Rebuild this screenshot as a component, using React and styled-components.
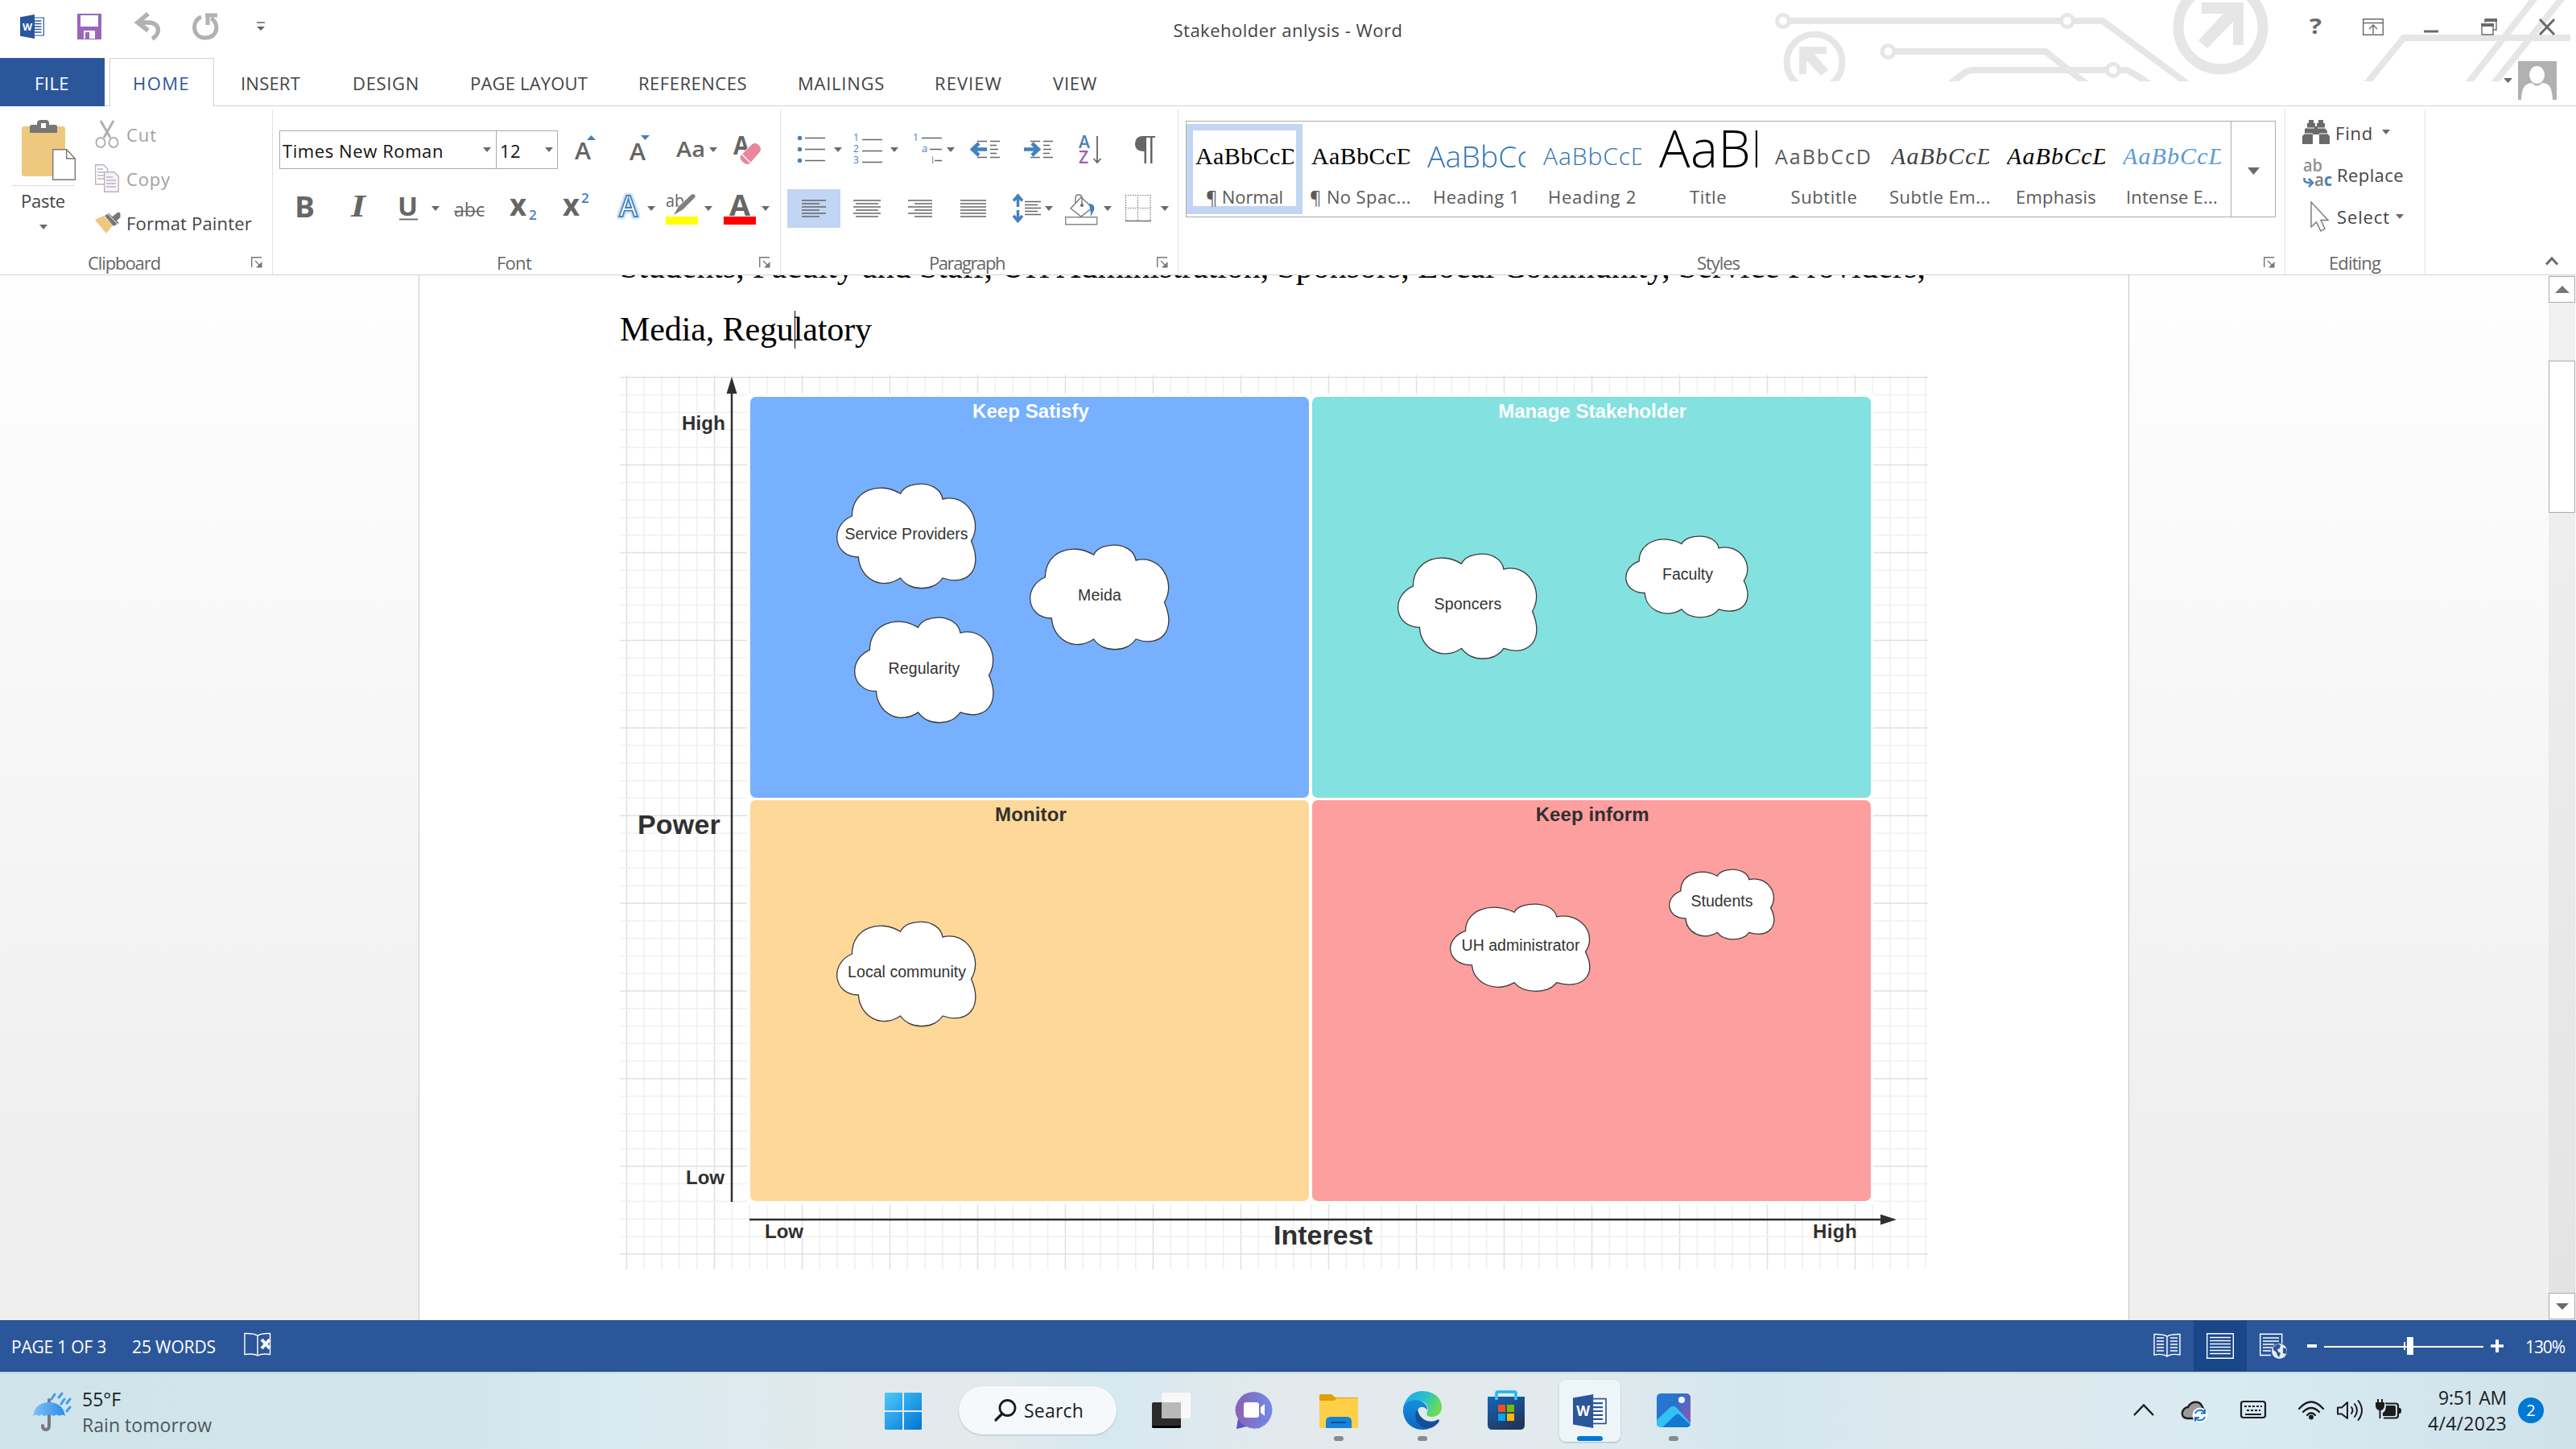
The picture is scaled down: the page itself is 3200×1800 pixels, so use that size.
import React, { useLayoutEffect, useRef, useState } from "react";
import styled, { createGlobalStyle } from "styled-components";

const UI = `"Open Sans", "Noto Sans", sans-serif`;
const SERIF = `"Liberation Serif", serif`;
const SANS = `"Liberation Sans", sans-serif`;
const BLUE = "#2b579a";

const Global = createGlobalStyle`
  * { box-sizing: border-box; }
  body { margin: 0; background: #fff; font-family: ${UI}; overflow: hidden; }
  svg { display: block; flex: none; overflow: visible; }
`;

/* ---------- text ---------- */
const Line = styled.span`
  display: block;
  flex: none;
  white-space: pre;
  width: ${(p) => (p.$w ? p.$w + "px" : "auto")};
  margin-left: ${(p) => p.$ml || 0}px;
  font-family: ${(p) => p.$font || UI};
  font-size: ${(p) => p.$size || 22}px;
  font-weight: ${(p) => p.$weight || 400};
  line-height: ${(p) => p.$lh || 30}px;
  color: ${(p) => p.$color || "#444"};
`;

/* Spreads or tightens the letters so the label fills its width. */
function Label({ w, children, ...rest }) {
  const ref = useRef(null);
  const [gap, setGap] = useState(0);
  useLayoutEffect(() => {
    const natural = ref.current.getBoundingClientRect().width;
    setGap((w - natural) / String(children).length);
  }, [w, children]);
  return (
    <Line $w={w} {...rest}>
      <span ref={ref} style={{ letterSpacing: gap }}>{children}</span>
    </Line>
  );
}

/* ---------- shell ---------- */
const Shell = styled.div`
  width: 3200px;
  height: 1800px;
  display: flex;
  flex-direction: column;
  background: #fff;
  overflow: hidden;
`;
const Header = styled.header`
  position: relative;
  flex: none;
  height: 132px;
`;
const Circuit = styled.svg`
  position: absolute;
  left: 2150px;
  top: 0;
`;
const TitleRow = styled.div`
  position: relative;
  height: 72px;
  display: flex;
  justify-content: space-between;
  align-items: flex-start;
`;
const QuickAccess = styled.div`
  width: 1457px;
  padding: 16px 0 0 25px;
  display: flex;
  align-items: center;
`;
const WindowControls = styled.div`
  width: 1457px;
  padding: 22px 26px 0 0;
  display: flex;
  justify-content: flex-end;
  align-items: center;
`;
const Glyph = styled.svg.attrs((p) => ({
  width: p.$w,
  height: p.$h || 48,
  viewBox: p.$box || `0 0 ${p.$w} ${p.$h || 48}`,
  fill: "none",
}))`
  margin-left: ${(p) => p.$ml || 0}px;
  margin-top: ${(p) => p.$mt || 0}px;
  font-family: ${UI};
`;
const TitleText = styled.div`
  padding-top: 22px;
`;

const TabRow = styled.nav`
  position: relative;
  height: 60px;
  display: flex;
  box-shadow: inset 0 -1px 0 #d4d4d4;
`;
const Tab = styled.div`
  height: 60px;
  width: ${(p) => p.$w}px;
  margin-left: ${(p) => p.$ml || 0}px;
  padding: ${(p) => (p.$kind === "active" ? 15 : 16)}px 0 0 ${(p) => p.$pad || 0}px;
  background: ${(p) => (p.$kind === "file" ? BLUE : p.$kind === "active" ? "#fff" : "transparent")};
  border: ${(p) => (p.$kind === "active" ? "1px solid #d4d4d4" : "none")};
  border-bottom: none;
`;
const Account = styled.div`
  margin-left: auto;
  padding: 4px 24px 0 0;
  display: flex;
  align-items: center;
  height: 52px;
`;

/* ---------- ribbon ---------- */
const Ribbon = styled.section`
  flex: none;
  height: 210px;
  display: flex;
  border-bottom: 1px solid #d2d2d2;
`;
const Group = styled.div`
  flex: none;
  width: ${(p) => p.$w}px;
  height: 205px;
  margin-top: 4px;
  border-right: 1px solid #e1e1e1;
  display: flex;
  flex-direction: column;
`;
const GroupBody = styled.div`
  flex: none;
  height: 175px;
  display: flex;
  flex-direction: ${(p) => (p.$col ? "column" : "row")};
  padding-top: ${(p) => p.$pt || 0}px;
  padding-left: ${(p) => p.$pl || 0}px;
  gap: ${(p) => p.$gap || 0}px;
`;
const GroupFooter = styled.div`
  height: 30px;
  display: flex;
  justify-content: space-between;
  padding-left: ${(p) => p.$pl}px;
  padding-right: 12px;
`;
const ToolRow = styled.div`
  height: 48px;
  display: flex;
  align-items: center;
`;
const ToggleCell = styled.div`
  width: 66px;
  height: 48px;
  margin-left: ${(p) => p.$ml || 0}px;
  background: ${(p) => (p.$on ? "#c2d5f2" : "transparent")};
  display: flex;
  align-items: center;
  justify-content: center;
`;
const Combo = styled.div`
  width: ${(p) => p.$w}px;
  height: 48px;
  margin-left: ${(p) => p.$ml || 0}px;
  border: 1px solid #ababab;
  display: flex;
  align-items: center;
  justify-content: space-between;
  padding: 2px ${(p) => p.$pr}px 0 ${(p) => p.$pl}px;
`;
const PasteButton = styled.div`
  width: 103px;
  padding: 13px 0 0 15px;
  display: flex;
  flex-direction: column;
`;
const Rule = styled.div`
  width: 78px;
  height: 1px;
  margin: 6px 0 3px;
  background: #dcdcdc;
`;
const CommandList = styled.div`
  padding: ${(p) => p.$pt}px 0 0 ${(p) => p.$pl}px;
  display: flex;
  flex-direction: column;
`;
const Command = styled.div`
  height: ${(p) => p.$h}px;
  display: flex;
  align-items: flex-start;
`;
const IconSlot = styled.div`
  width: ${(p) => p.$w}px;
  flex: none;
`;

const Gallery = styled.div`
  width: 1354px;
  height: 120px;
  border: 1px solid #ababab;
  display: flex;
`;
const StyleTile = styled.div`
  width: 144px;
  height: 112px;
  margin-top: 3px;
  border-style: solid;
  border-width: 8px 8px 10px 8px;
  border-color: ${(p) => (p.$on ? "#c2d5f2" : "transparent")};
`;
const Sample = styled.div`
  height: 59px;
  width: 122px;
  margin-left: 3px;
  overflow: hidden;
  display: flex;
  align-items: flex-end;
  font-style: ${(p) => (p.$italic ? "italic" : "normal")};
`;
const SampleText = styled.span`
  display: block;
  white-space: pre;
  font-family: ${(p) => p.$font || UI};
  font-size: ${(p) => p.$size}px;
  font-weight: ${(p) => p.$weight || 400};
  letter-spacing: ${(p) => p.$ls || 0}px;
  line-height: ${(p) => p.$lh || 54}px;
  color: ${(p) => p.$color};
`;
const TileName = styled.div`
  height: 30px;
  margin-top: 8px;
  display: flex;
  justify-content: center;
`;
const GalleryMore = styled.div`
  width: 55px;
  margin-left: auto;
  border-left: 1px solid #ababab;
  display: flex;
  justify-content: center;
  align-items: center;
`;
const RibbonTail = styled.div`
  flex: 1;
  display: flex;
  justify-content: flex-end;
  align-items: flex-end;
  padding: 0 22px 11px 0;
`;

/* ---------- document ---------- */
const Workspace = styled.main`
  flex: none;
  height: 1298px;
  display: flex;
  overflow: hidden;
  background: linear-gradient(#fefefe 0%, #fbfbfb 20%, #efefef 85%, #efefef 100%);
`;
const Page = styled.article`
  width: 2125px;
  height: 1298px;
  margin-left: 520px;
  padding-left: 249px;
  background: #fff;
  border: solid #c8c8c8;
  border-width: 0 1px;
`;
const Paragraph = styled.div`
  height: 158px;
  margin-top: -51px;
`;
const TextRow = styled.div`
  position: relative;
  height: ${(p) => p.$h || 80}px;
`;
const Caret = styled.div`
  position: absolute;
  left: 217px;
  top: 17px;
  width: 1px;
  height: 47px;
  background: #000;
`;
const Scrollbar = styled.div`
  width: 33px;
  height: 1298px;
  margin-left: auto;
  margin-right: 1px;
  padding: 1px 0;
  display: flex;
  flex-direction: column;
  background: linear-gradient(#f1f1f1, #e3e3e3);
`;
const ScrollButton = styled.div`
  height: 33px;
  border: 1px solid #ababab;
  background: #fff;
  display: flex;
  align-items: center;
  justify-content: center;
`;
const Thumb = styled.div`
  height: 189px;
  margin: 72px 0 auto;
  border: 1px solid #ababab;
  background: #fff;
`;

const Canvas = styled.div`
  position: relative;
  width: 1625px;
  height: 1111px;
  margin-top: 17px;
`;
const Layer = styled.svg`
  position: absolute;
  left: 0;
  top: 0;
`;
const Matrix = styled.div`
  position: absolute;
  left: 158px;
  top: 23px;
  width: 1399px;
  height: 1007px;
  padding: 4px 3px 4px 4px;
  background: #fff;
  display: grid;
  grid-template-columns: 694px 694px;
  grid-template-rows: 497.5px 497.5px;
  gap: 3.7px;
`;
const Quadrant = styled.div`
  border-radius: 7px;
  background: ${(p) => p.$bg};
  display: flex;
  justify-content: center;
  padding: 3px 0 0 3px;
`;
const Pin = styled.div`
  position: absolute;
  left: ${(p) => p.$x}px;
  top: ${(p) => p.$y}px;
`;
const CloudBox = styled.div`
  position: absolute;
  left: ${(p) => p.$x}px;
  top: ${(p) => p.$y}px;
  width: ${(p) => p.$w}px;
  height: ${(p) => p.$h}px;
  padding-top: ${(p) => p.$ty}px;
`;
const CloudShape = styled.svg`
  position: absolute;
  left: 0;
  top: 0;
  width: 100%;
  height: 100%;
`;
const CloudText = styled.div`
  position: relative;
  margin-left: ${(p) => p.$tx}px;
`;

/* ---------- status bar ---------- */
const StatusBar = styled.footer`
  flex: none;
  height: 64px;
  display: flex;
  align-items: center;
  background: ${BLUE};
  border-top: 1px solid #1f4985;
  border-bottom: 1px solid #1f4985;
`;
const StatusText = styled.div`
  padding-top: 2px;
  margin-left: ${(p) => p.$ml}px;
`;
const ViewCell = styled.div`
  width: 66px;
  height: 62px;
  margin-left: ${(p) => (p.$push ? "auto" : 0)};
  background: ${(p) => (p.$on ? "#19478a" : "transparent")};
  display: flex;
  align-items: center;
  justify-content: center;
`;

/* ---------- taskbar ---------- */
const Taskbar = styled.footer`
  flex: none;
  height: 96px;
  display: flex;
  background: linear-gradient(90deg, #cfe4ea 0%, #d3e5eb 18%, #d9ebf1 24%, #e2e9ec 34%, #e4e9ec 38%, #d6e9f0 43%, #e3e9ed 50%, #e2eaee 60%, #d4e7ee 68%, #dde9ee 76%, #d8eaf1 88%, #cfe2e9 100%);
  box-shadow: inset 0 2px 0 rgba(120, 140, 150, 0.18);
`;
const Weather = styled.div`
  width: 1099px;
  padding: 18px 0 0 41px;
  display: flex;
`;
const Stack = styled.div`
  margin-left: ${(p) => p.$ml || 0}px;
  padding-top: ${(p) => p.$pt || 0}px;
  display: flex;
  flex-direction: column;
  align-items: ${(p) => (p.$end ? "flex-end" : "flex-start")};
`;
const Apps = styled.div`
  display: flex;
  height: 96px;
`;
const SearchPill = styled.div`
  width: 196px;
  height: 60px;
  margin: 18px 0 0 46px;
  padding-left: 44px;
  border-radius: 30px;
  background: #f6f9fb;
  box-shadow: 0 1px 2px rgba(90, 110, 130, 0.35);
  display: flex;
  align-items: center;
`;
const AppSlot = styled.div`
  width: 76px;
  height: 77px;
  margin: 10px 0 0 ${(p) => p.$ml}px;
  padding-top: ${(p) => p.$pt}px;
  border-radius: 8px;
  background: ${(p) => (p.$on ? "#eef5f8" : "transparent")};
  box-shadow: ${(p) => (p.$on ? "0 1px 2px rgba(90,110,130,.4)" : "none")};
  display: flex;
  flex-direction: column;
  align-items: center;
`;
const RunMark = styled.div`
  width: ${(p) => (p.$on ? 32 : 12)}px;
  height: 6px;
  margin-top: auto;
  margin-bottom: 1px;
  border-radius: 3px;
  background: ${(p) => (p.$on ? "#0078d4" : "#858b8e")};
`;
const Tray = styled.div`
  flex: 1;
  display: flex;
  justify-content: flex-end;
  padding-right: 40px;
`;
const Badge = styled.div`
  width: 32px;
  height: 32px;
  margin: 32px 0 0 14px;
  border-radius: 50%;
  background: #0078d4;
  display: flex;
  align-items: center;
  justify-content: center;
`;

/* ---------- small pieces ---------- */
const G = "#666";
const B = "#4380bd";

const Arrow = ({ ml, mt, w = 10, h = 6 }) => (
  <Glyph $w={w} $h={h} $ml={ml} $mt={mt}>
    <path d={`M0 0H${w}L${w / 2} ${h}Z`} fill="#6a6a6a" />
  </Glyph>
);
const Launcher = () => (
  <Glyph $w={14} $h={14} $mt={8}>
    <path d="M.7 13V.7H13M5 5l7 7" stroke="#777" strokeWidth="1.4" />
    <path d="M13.5 6v7.5H6z" fill="#777" />
  </Glyph>
);
const Lines = ({ rows, color = "#666", sw = 1.4 }) => (
  <path d={rows.map(([x, y, w]) => `M${x} ${y}h${w}`).join("")} stroke={color} strokeWidth={sw} />
);
const T = ({ x, y, s, c = G, w = 400, children, ...r }) => (
  <text x={x} y={y} fontSize={s} fill={c} fontWeight={w} {...r}>{children}</text>
);

const WordLogo = ({ w, h, ml, tile }) => (
  <Glyph $w={w} $h={h} $ml={ml} $box="0 0 30 30">
    <path d="M15 4h14.3v22H15z" fill="#fff" stroke={BLUE} strokeWidth="1.2" />
    <path d="M17 8h9.500M17 11.500h9.500M17 15h9.500M17 18.500h9.500M17 22h9.500" stroke={BLUE} strokeWidth={tile ? 1.6 : 1.3} />
    <path d="M0 3.200L18 0v30L0 26.800z" fill={BLUE} />
    <T x="3" y="19.500" s="13" c="#fff" w="700" textLength="12" lengthAdjust="spacingAndGlyphs">W</T>
  </Glyph>
);

/* ---------- header ---------- */
const CircuitArt = () => (
  <Circuit width="1050" height="101" viewBox="2150 0 1050 101" style={{ overflow: "hidden" }}>
    <g fill="none" stroke="#e6e6e6" strokeWidth="8">
      <path d="M2224 26H2612L2720 106" />
      <path d="M2354 64H2541L2594 106" />
      <path d="M2420 106L2438 92Q2444 87 2452 87H2640Q2648 88 2672 106" />
      <path d="M2938 106L2986 47H3193M3064 106L3150 -4M3096 106L3184 -4" />
      <circle cx="2254" cy="77" r="34.500" />
      <circle cx="2758.500" cy="33.500" r="52.500" strokeWidth="13" />
    </g>
    <g fill="#fff" stroke="#e6e6e6" strokeWidth="5">
      <circle cx="2215" cy="26" r="7.500" />
      <circle cx="2568" cy="26" r="7.500" />
      <circle cx="2345.500" cy="64" r="7.500" />
      <circle cx="2625" cy="87" r="7.500" />
    </g>
    <g fill="#e6e6e6">
      <path d="M2735 3H2787V56H2774V27L2742 60L2731 50L2762 17H2735Z" />
      <path d="M2269 58H2235V92H2244V75L2262 94L2271 87L2254 67H2269Z" />
    </g>
  </Circuit>
);

const TABS = [
  ["INSERT", 33, 74],
  ["DESIGN", 65, 83],
  ["PAGE LAYOUT", 63, 146],
  ["REFERENCES", 63, 135],
  ["MAILINGS", 63, 108],
  ["REVIEW", 62, 84],
  ["VIEW", 63, 55],
];

function TopBar() {
  return (
    <Header>
      <CircuitArt />
      <TitleRow>
        <QuickAccess>
          <WordLogo w={30} h={32} />
          <Glyph $w={32} $h={34} $ml={40}>
            <path d="M1 1h30v32H1z" fill="#9a66bb" />
            <path d="M5 3h22v14H5zM9 22h14v10H9z" fill="#fff" />
            <path d="M11 24h5v8h-5z" fill="#9a66bb" />
          </Glyph>
          <Glyph $w={32} $h={34} $ml={41}>
            <path d="M16 1L3 12L16 22M4 12H17C32 13 31 27 21 32" stroke="#b1b1b1" strokeWidth="5.500" />
          </Glyph>
          <Glyph $w={34} $h={34} $ml={38}>
            <path d="M12 5C0 9 0 31 17 31C34 31 34 11 24 7M17 3H32M20 3V15" stroke="#b1b1b1" strokeWidth="5" />
          </Glyph>
          <Glyph $w={10} $h={12} $ml={47}>
            <path d="M0 1h10" stroke={G} strokeWidth="1.500" />
            <path d="M0 6h10l-5 5z" fill={G} />
          </Glyph>
        </QuickAccess>
        <TitleText><Label w={285} $size={22}>Stakeholder anlysis - Word</Label></TitleText>
        <WindowControls>
          <Glyph $w={16} $h={22}><T x="0" y="20" s="27" c="#6a6a6a" w="700" textLength="15" lengthAdjust="spacingAndGlyphs">?</T></Glyph>
          <Glyph $w={26} $h={21} $ml={50}>
            <path d="M.7 .7h24.600v19.600H.7zM.7 5.500h24.600M13 19V9M8 13l5-5 5 5" stroke="#6a6a6a" strokeWidth="1.400" />
          </Glyph>
          <Glyph $w={18} $h={21} $ml={50}><path d="M0 14.500h18v3H0z" fill="#6a6a6a" /></Glyph>
          <Glyph $w={20} $h={21} $ml={53}>
            <path d="M5 5V1h14v13h-4M1 8h14v12H1z" stroke="#6a6a6a" strokeWidth="1.400" />
            <path d="M5 0h15v4H5zM0 6h16v4H0z" fill="#6a6a6a" />
          </Glyph>
          <Glyph $w={20} $h={21} $ml={52}><path d="M1 1l18 19M19 1L1 20" stroke="#6a6a6a" strokeWidth="3" /></Glyph>
        </WindowControls>
      </TitleRow>
      <TabRow>
        <Tab $kind="file" $w={130} $pad={43}><Label w={43} $color="#fff">FILE</Label></Tab>
        <Tab $kind="active" $w={130} $ml={6} $pad={28}><Label w={71} $color={BLUE}>HOME</Label></Tab>
        {TABS.map(([name, ml, w]) => (
          <Tab key={name} $ml={ml} $w={w}><Label w={w}>{name}</Label></Tab>
        ))}
        <Account>
          <Arrow w={11} ml={0} mt={0} />
          <Glyph $w={48} $h={48} $ml={7}>
            <path d="M0 0h48v48H0z" fill="#b1b1b1" />
            <ellipse cx="23.500" cy="17" rx="9.500" ry="11" fill="#fff" />
            <path d="M4 48C5 30 10 28 17 27Q23.500 34 30 27C38 28 42 30 43 48Z" fill="#fff" />
          </Glyph>
        </Account>
      </TabRow>
    </Header>
  );
}

/* ---------- ribbon groups ---------- */
function Clipboard() {
  return (
    <Group $w={339}>
      <GroupBody>
        <PasteButton>
          <Glyph $w={67} $h={75} $ml={12}>
            <rect x="0" y="8" width="54" height="62" rx="3" fill="#edc87e" />
            <path d="M10 16V8q0-2 3-2h6V4q0-4 5-4h6q4 0 4 4v2h7q3 0 3 2v8z" fill="#777" />
            <path d="M24 4h6v6h-6z" fill="#fff" />
            <path d="M38.700 36.700h17L66.300 48v26.300H38.700z" fill="#fff" stroke="#777" strokeWidth="1.400" />
            <path d="M55.700 36.700V48h10.600" stroke="#777" strokeWidth="1.400" />
          </Glyph>
          <Rule />
          <Label w={55} $ml={11}>Paste</Label>
          <Arrow ml={34} mt={15} />
        </PasteButton>
        <CommandList $pt={16} $pl={15}>
          <Command $h={55}>
            <IconSlot $w={38}>
              <Glyph $w={30} $h={34} $mt={-2}>
                <path d="M7 0L19 21M23 0L11 21" stroke="#b1b1b1" strokeWidth="3" />
                <ellipse cx="7" cy="27" rx="5.500" ry="6" stroke="#b1b1b1" strokeWidth="2" />
                <ellipse cx="23" cy="27" rx="5.500" ry="6" stroke="#b1b1b1" strokeWidth="2" />
              </Glyph>
            </IconSlot>
            <Label w={38} $ml={1} $color="#a0a0a0">Cut</Label>
          </Command>
          <Command $h={55}>
            <IconSlot $w={38}>
              <Glyph $w={30} $h={35} $mt={-3}>
                <path d="M.7 .7h10l5 5V25H.7z" fill="#fff" stroke="#b9b3bd" strokeWidth="1.400" />
                <Lines rows={[[3, 6, 7], [3, 10, 8], [3, 14, 8], [3, 18, 8]]} color="#b9b3bd" />
                <path d="M11.700 9.700h12l5.600 5.300v19.300H11.700z" fill="#f7f4f9" stroke="#b9b3bd" strokeWidth="1.400" />
                <Lines rows={[[14, 16, 8], [14, 20, 12], [14, 24, 12], [14, 28, 12]]} color="#b9b3bd" />
              </Glyph>
            </IconSlot>
            <Label w={55} $ml={1} $color="#a0a0a0">Copy</Label>
          </Command>
          <Command $h={30}>
            <IconSlot $w={38}>
              <Glyph $w={32} $h={27} $mt={2}>
                <path d="M0 9L11 4L22 16L14 26Z" fill="#edc87e" />
                <path d="M12 4L17 1L30 13L23 17ZM18 8L28 0q3-1 3.500 2v4L24 13Z" fill="#777" />
                <path d="M16 2l12 12" stroke="#fff" strokeWidth="1" />
              </Glyph>
            </IconSlot>
            <Label w={156} $ml={1}>Format Painter</Label>
          </Command>
        </CommandList>
      </GroupBody>
      <GroupFooter $pl={109}>
        <Label w={90} $color="#666">Clipboard</Label>
        <Launcher />
      </GroupFooter>
    </Group>
  );
}

function FontGroup() {
  return (
    <Group $w={631}>
      <GroupBody $col $pt={26} $gap={25}>
        <ToolRow>
          <Combo $ml={8} $w={270} $pl={3} $pr={6}>
            <Label w={200} $color="#111">Times New Roman</Label><Arrow mt={-2} />
          </Combo>
          <Combo $w={77} $ml={-1} $pl={4} $pr={5}>
            <Label w={26} $color="#111">12</Label><Arrow mt={-2} />
          </Combo>
          <Glyph $w={32} $ml={20}>
            <T x="1" y="36" s="28" w="600" textLength="20" lengthAdjust="spacingAndGlyphs">A</T>
            <path d="M16 12h11l-5.500-6z" fill={B} />
          </Glyph>
          <Glyph $w={32} $ml={36}>
            <T x="1" y="37" s="28" w="600" textLength="20" lengthAdjust="spacingAndGlyphs">A</T>
            <path d="M15 6h11l-5.500 6z" fill={B} />
          </Glyph>
          <Glyph $w={38} $ml={26}><T x="1" y="33" s="27" w="600" textLength="36" lengthAdjust="spacingAndGlyphs">Aa</T></Glyph>
          <Arrow ml={4} />
          <Glyph $w={38} $ml={19}>
            <T x="1" y="30" s="32" w="700" textLength="20" lengthAdjust="spacingAndGlyphs">A</T>
            <path d="M9 32L25 16q4-2 8 2q4 4 2 8L21 42q-4 2-8-2q-5-4-4-8z" fill="#e8869a" stroke="#fff" strokeWidth="1" />
            <path d="M11 29l11 11" stroke="#fff" strokeWidth="1.500" />
          </Glyph>
        </ToolRow>
        <ToolRow>
          <Glyph $w={30} $ml={25}><T x="2" y="35" s="35" w="700" textLength="25" lengthAdjust="spacingAndGlyphs">B</T></Glyph>
          <Glyph $w={28} $ml={38}><T x="4" y="34" s="39" w="700" fontStyle="italic" fontFamily="Liberation Serif" textLength="18" lengthAdjust="spacingAndGlyphs">I</T></Glyph>
          <Glyph $w={30} $ml={32}>
            <T x="2" y="33" s="32" w="700" textLength="25" lengthAdjust="spacingAndGlyphs">U</T>
            <path d="M4 37.500h23" stroke={G} strokeWidth="1.800" />
          </Glyph>
          <Arrow ml={14} />
          <Glyph $w={42} $ml={16}>
            <T x="2" y="34" s="23" textLength="38" lengthAdjust="spacingAndGlyphs">abc</T>
            <path d="M2 27.500h38" stroke={G} strokeWidth="1.500" />
          </Glyph>
          <Glyph $w={36} $ml={28}>
            <T x="1" y="33" s="37" w="700" textLength="21" lengthAdjust="spacingAndGlyphs">x</T>
            <T x="25" y="38" s="17" w="600" c={B}>2</T>
          </Glyph>
          <Glyph $w={36} $ml={30}>
            <T x="1" y="33" s="37" w="700" textLength="21" lengthAdjust="spacingAndGlyphs">x</T>
            <T x="24" y="17" s="17" w="600" c={B}>2</T>
          </Glyph>
          <Glyph $w={34} $ml={30}>
            <T x="5" y="34" s="36" w="600" c="#fff" stroke="#a9cbee" strokeWidth="7" strokeLinejoin="round" opacity=".5" textLength="23" lengthAdjust="spacingAndGlyphs">A</T>
            <T x="5" y="34" s="36" w="600" c="#fff" stroke={B} strokeWidth="1.800" textLength="23" lengthAdjust="spacingAndGlyphs">A</T>
          </Glyph>
          <Arrow ml={6} />
          <Glyph $w={42} $ml={13}>
            <T x="0" y="22" s="22" textLength="23" lengthAdjust="spacingAndGlyphs">ab</T>
            <path d="M9 33L15 22L32 6q6-1 5 4L21 26Z" fill="#808080" stroke="#fff" strokeWidth="1" />
            <path d="M0 34h40v10H0z" fill="#ff0" />
          </Glyph>
          <Arrow ml={6} />
          <Glyph $w={40} $ml={14}>
            <T x="7" y="33" s="36" w="700" textLength="26" lengthAdjust="spacingAndGlyphs">A</T>
            <path d="M0 34h40v10H0z" fill="#f00" />
          </Glyph>
          <Arrow ml={7} />
        </ToolRow>
      </GroupBody>
      <GroupFooter $pl={278}>
        <Label w={43} $color="#666">Font</Label>
        <Launcher />
      </GroupFooter>
    </Group>
  );
}

const align = (spans) => spans.map(([x, w], i) => [x, 2 + i * 4, w]);
const INDENT_LINES = [[10, 13.5, 12], [26, 13.5, 12], [26, 18.5, 8], [26, 23.5, 10], [26, 28.5, 8], [10, 33.5, 12], [26, 33.5, 12]];

function ParagraphGroup() {
  return (
    <Group $w={494}>
      <GroupBody $col $pt={26} $gap={25}>
        <ToolRow>
          <Glyph $w={38} $ml={19}>
            {[9.500, 23.500, 37.500].map((y) => <circle key={y} cx="4.500" cy={y} r="2.700" fill={B} />)}
            <Lines rows={[[11, 9.5, 25], [11, 23.5, 25], [11, 37.5, 25]]} />
          </Glyph>
          <Arrow ml={9} />
          <Glyph $w={38} $ml={14}>
            <T x="0" y="13" s="12" c={B}>1</T><T x="0" y="27" s="12" c={B}>2</T><T x="0" y="41" s="12" c={B}>3</T>
            <Lines rows={[[11, 11.5, 25], [11, 25.5, 25], [11, 39.5, 25]]} />
          </Glyph>
          <Arrow ml={8} />
          <Glyph $w={40} $ml={16}>
            <T x="2" y="13" s="12" c={B}>1</T><T x="13" y="27" s="13" c={B}>a</T><T x="25" y="41" s="12" c={B}>i</T>
            <Lines rows={[[13, 9.5, 25], [23, 23.5, 15], [29, 37.5, 9]]} />
          </Glyph>
          <Arrow ml={4} />
          <Glyph $w={40} $ml={18}>
            <Lines rows={INDENT_LINES} />
            <path d="M12 16L4 23.500L12 31M4 23.500H22" stroke={B} strokeWidth="4.500" />
          </Glyph>
          <Glyph $w={40} $ml={26}>
            <Lines rows={INDENT_LINES} />
            <path d="M12 16L20 23.500L12 31M20 23.500H2" stroke={B} strokeWidth="4.500" />
          </Glyph>
          <Glyph $w={32} $ml={29}>
            <T x="1" y="22" s="21" c={B} w="600">A</T>
            <T x="1" y="41" s="21" c="#9a5fb8" w="600">Z</T>
            <path d="M24 7V40M19.500 35l4.500 5 4.500-5" stroke={G} strokeWidth="1.800" />
          </Glyph>
          <Glyph $w={30} $ml={37}>
            <path d="M12 7H27V9H23.500V41H21V9H16V41H13.500V26Q2 26 2 16.500T12 7Z" fill={G} />
          </Glyph>
        </ToolRow>
        <ToolRow>
          <ToggleCell $ml={8} $on>
            <Glyph $w={30} $h={24}><Lines rows={align([[0, 30], [0, 22], [0, 30], [0, 22], [0, 30], [0, 22]])} /></Glyph>
          </ToggleCell>
          <ToggleCell>
            <Glyph $w={34} $h={24}><Lines rows={align([[0, 34], [3, 28], [0, 34], [3, 28], [0, 34], [3, 28]])} /></Glyph>
          </ToggleCell>
          <ToggleCell>
            <Glyph $w={30} $h={24}><Lines rows={align([[0, 30], [8, 22], [0, 30], [8, 22], [0, 30], [8, 22]])} /></Glyph>
          </ToggleCell>
          <ToggleCell>
            <Glyph $w={32} $h={24}><Lines rows={align([[0, 32], [0, 32], [0, 32], [0, 32], [0, 32], [0, 32]])} /></Glyph>
          </ToggleCell>
          <Glyph $w={40} $ml={14}>
            <path d="M8.500 9V22M8.500 26V38M3 14.500L8.500 8L14 14.500M3 33L8.500 39.500L14 33" stroke={B} strokeWidth="3.500" />
            <Lines rows={[[17, 15.5, 20], [17, 19.5, 16], [17, 23.5, 20], [17, 27.5, 16], [17, 31.5, 20]]} />
          </Glyph>
          <Arrow ml={2} />
          <Glyph $w={44} $ml={13}>
            <path d="M22 10L36 23L22 34L9 24Z" fill="#fff" stroke="#777" strokeWidth="1.400" />
            <path d="M15 18V11q0-4 4-4t4 4V20" stroke="#777" strokeWidth="1.400" />
            <circle cx="23" cy="20" r="2" fill={G} />
            <path d="M31 18Q40 18 38 26L34 34Q34 24 31 18Z" fill={B} />
            <path d="M2.700 34.700h39v9h-39z" fill="#fff" stroke="#888" strokeWidth="1.400" />
          </Glyph>
          <Arrow ml={6} />
          <Glyph $w={38} $ml={14}>
            <path d="M3 7.500H34M3 23.500H34M3.500 7V39M18.500 7V39M34 7V39" stroke="#777" strokeWidth="1.200" strokeDasharray="1.500 1.500" />
            <path d="M3 39.500H35" stroke="#777" strokeWidth="1.600" />
          </Glyph>
          <Arrow ml={9} />
        </ToolRow>
      </GroupBody>
      <GroupFooter $pl={184}>
        <Label w={94} $color="#666">Paragraph</Label>
        <Launcher />
      </GroupFooter>
    </Group>
  );
}

const STYLES = [
  ["¶ Normal", 96, { font: SERIF, size: 30, color: "#000", ls: 0.4 }],
  ["¶ No Spac...", 126, { font: SERIF, size: 30, color: "#000", ls: 0.4 }],
  ["Heading 1", 108, { size: 37, weight: 300, color: "#2e74b5", ls: 0.3 }],
  ["Heading 2", 110, { size: 30, weight: 300, color: "#2e74b5", ls: 0.9 }],
  ["Title", 46, { size: 64, weight: 300, color: "#000", ls: 0.6, lh: 74 }],
  ["Subtitle", 83, { size: 25, color: "#5a5a5a", ls: 2 }],
  ["Subtle Em...", 126, { font: SERIF, size: 30, color: "#404040", italic: true, ls: 1.1 }],
  ["Emphasis", 100, { font: SERIF, size: 30, color: "#000", italic: true, ls: 1.1 }],
  ["Intense E...", 114, { font: SERIF, size: 30, color: "#5b9bd5", italic: true, ls: 1.1 }],
];

function StylesGroup() {
  return (
    <Group $w={1375}>
      <GroupBody $pt={14} $pl={9}>
        <Gallery>
          {STYLES.map(([name, w, s], i) => (
            <StyleTile key={name} $on={i === 0}>
              <Sample $italic={s.italic}>
                <SampleText $font={s.font} $size={s.size} $weight={s.weight} $color={s.color} $ls={s.ls} $lh={s.lh}>
                  {s.size > 60 ? "AaBb" : s.size > 36 ? "AaBbCc" : "AaBbCcD"}
                  {s.size === 25 ? "d" : ""}
                </SampleText>
              </Sample>
              <TileName><Label w={w} $color="#5a5a5a">{name}</Label></TileName>
            </StyleTile>
          ))}
          <GalleryMore><Arrow w={15} h={9} mt={4} /></GalleryMore>
        </Gallery>
      </GroupBody>
      <GroupFooter $pl={644}>
        <Label w={53} $color="#666">Styles</Label>
        <Launcher />
      </GroupFooter>
    </Group>
  );
}

function EditingGroup() {
  return (
    <Group $w={174}>
      <GroupBody>
        <CommandList $pt={14} $pl={21}>
          <Command $h={52}>
            <IconSlot $w={41}>
              <Glyph $w={34} $h={30} $mt={-1}>
                <path d="M8 0h6v4h2v4h2V4h2V0h6v4h2v6l3 4v3l3 3v10H21V18h-8v12H0V20l3-3v-6l3-1V4h2z" fill="#6a6a6a" />
                <path d="M6 10h9M19 10h10M3 17h10M21 17h10" stroke="#fff" strokeWidth="1" />
              </Glyph>
            </IconSlot>
            <Label w={47}>Find</Label>
            <Arrow ml={11} mt={11} />
          </Command>
          <Command $h={52}>
            <IconSlot $w={43}>
              <Glyph $w={38} $h={36} $mt={-5}>
                <T x="1" y="16" s="21" c="#909090" w="600" textLength="24" lengthAdjust="spacingAndGlyphs">ab</T>
                <T x="15" y="34" s="21" c="#808080" w="600" textLength="12" lengthAdjust="spacingAndGlyphs">a</T>
                <T x="27" y="34" s="21" c={B} w="700" textLength="10" lengthAdjust="spacingAndGlyphs">c</T>
                <path d="M2.500 24v3q0 3 8 3M8 25l5 5-5 5" stroke={B} strokeWidth="2.500" />
              </Glyph>
            </IconSlot>
            <Label w={83}>Replace</Label>
          </Command>
          <Command $h={40}>
            <IconSlot $w={43}>
              <Glyph $w={24} $h={38} $ml={10} $mt={-4}>
                <path d="M1 1V32L7.500 26L13 37L18 34L13 23.500H22Z" fill="#fff" stroke="#777" strokeWidth="1.400" />
              </Glyph>
            </IconSlot>
            <Label w={66}>Select</Label>
            <Arrow ml={7} mt={12} />
          </Command>
        </CommandList>
      </GroupBody>
      <GroupFooter $pl={54}><Label w={64} $color="#666">Editing</Label></GroupFooter>
    </Group>
  );
}

/* ---------- diagram ---------- */
const CLOUD =
  "M78.600 12.300C86 -5 127 -5 131 19C160 11 182 45 166.500 71.200C182 106 162 128 131 117C120 134 90 134 78.600 117C55 133 28 118 26.400 91C-5 91 -10 52 18.400 40C18.400 8 52 -4 78.600 12.300Z";

const CLOUDS = [
  ["Service Providers", 269.6, 134.7, 173, 130, 10, 153, 69.2],
  ["Meida", 509.5, 211, 173, 130, 59.5, 54, 69.2],
  ["Regularity", 291.5, 301, 173, 131, 42, 89, 69.5],
  ["Sponcers", 967, 221.5, 173, 130.5, 44.5, 84, 69.5],
  ["Faculty", 1250, 200, 152, 101, 45, 63, 54.4],
  ["Local community", 269.6, 679, 173, 130, 13.5, 147, 69.2],
  ["UH administrator", 1032, 657, 174, 108.5, 13.5, 147, 58],
  ["Students", 1304, 613.7, 130.5, 87, 26.5, 77, 46.8],
];

const vLines = Array.from({ length: 75 }, (_, k) => [8.5 + k * 21.8, k % 5 === 0]);
const hLines = Array.from({ length: 51 }, (_, k) => [2.7 + k * 21.78, k % 5 === 0]);

function Diagram() {
  const dark = "#303030";
  return (
    <Canvas>
      <Layer width="1625" height="1111">
        {vLines.map(([x, m]) => <path key={x} d={`M${x} 0V1111`} stroke={m ? "#e0e0e0" : "#efefef"} strokeWidth="1.500" />)}
        {hLines.map(([y, m]) => <path key={y} d={`M0 ${y}H1625`} stroke={m ? "#e0e0e0" : "#f0f0f0"} strokeWidth="1.500" />)}
      </Layer>
      <Matrix>
        <Quadrant $bg="#76b0ff"><Label w={145} $font={SANS} $size={24} $weight={700} $color="#fff">Keep Satisfy</Label></Quadrant>
        <Quadrant $bg="#83e1e0"><Label w={234} $font={SANS} $size={24} $weight={700} $color="#fff">Manage Stakeholder</Label></Quadrant>
        <Quadrant $bg="#fed899"><Label w={89} $font={SANS} $size={24} $weight={700} $color={dark}>Monitor</Label></Quadrant>
        <Quadrant $bg="#fe9f9f"><Label w={141} $font={SANS} $size={24} $weight={700} $color={dark}>Keep inform</Label></Quadrant>
      </Matrix>
      <Layer width="1625" height="1111">
        <path d="M139 10V1027M161 1049H1570" stroke={dark} strokeWidth="2.500" />
        <path d="M132.500 23L139 2L145.500 23ZM1566 1042.500L1586 1049L1566 1055.500Z" fill={dark} />
      </Layer>
      <Pin $x={77} $y={45.3}><Label w={54} $font={SANS} $size={24} $weight={700} $color={dark}>High</Label></Pin>
      <Pin $x={22} $y={536}><Label w={103} $font={SANS} $size={34} $weight={700} $color={dark} $lh={44}>Power</Label></Pin>
      <Pin $x={82} $y={982}><Label w={48} $font={SANS} $size={24} $weight={700} $color={dark}>Low</Label></Pin>
      <Pin $x={180} $y={1049}><Label w={48} $font={SANS} $size={24} $weight={700} $color={dark}>Low</Label></Pin>
      <Pin $x={812} $y={1046}><Label w={123} $font={SANS} $size={34} $weight={700} $color={dark} $lh={44}>Interest</Label></Pin>
      <Pin $x={1482} $y={1049}><Label w={55} $font={SANS} $size={24} $weight={700} $color={dark}>High</Label></Pin>
      {CLOUDS.map(([name, x, y, w, h, tx, tw, base]) => (
        <CloudBox key={name} $x={x} $y={y} $w={w} $h={h} $ty={base - 22}>
          <CloudShape viewBox="0 0 173 130" preserveAspectRatio="none">
            <path d={CLOUD} fill="#fff" stroke="#3a3a3a" strokeWidth="1.300" vectorEffect="non-scaling-stroke" />
          </CloudShape>
          <CloudText $tx={tx}><Label w={tw} $font={SANS} $size={19.5} $color="#333">{name}</Label></CloudText>
        </CloudBox>
      ))}
    </Canvas>
  );
}

/* ---------- bottom bars ---------- */
function Status() {
  const w = "#fff";
  return (
    <StatusBar>
      <StatusText $ml={14}><Label w={118} $size={21} $color={w}>PAGE 1 OF 3</Label></StatusText>
      <StatusText $ml={32}><Label w={104} $size={21} $color={w}>25 WORDS</Label></StatusText>
      <Glyph $w={34} $h={30} $ml={35} $mt={-4}>
        <path d="M17 4Q12 1 1 1.500V27.500Q12 26 17 29Q22 26 32.500 27.500V1.500Q22 1 17 4V29" stroke={w} strokeWidth="1.400" />
        <path d="M22 9l10 11M32 9L22 20" stroke={w} strokeWidth="4" />
      </Glyph>
      <ViewCell $push>
        <Glyph $w={34} $h={30} $mt={-2}>
          <path d="M17 4Q12 1 1 1.500V27Q12 25 17 29Q22 25 33 27V1.500Q22 1 17 4V29" stroke={w} strokeWidth="1.400" />
          <Lines rows={[6, 10, 14, 18, 22].flatMap((y) => [[4, y, 9], [21, y, 9]])} color={w} sw={1.3} />
        </Glyph>
      </ViewCell>
      <ViewCell $on>
        <Glyph $w={34} $h={32}>
          <path d="M.7 .7h32.600v30.600H.7z" stroke={w} strokeWidth="1.400" />
          <Lines rows={[5.5, 9.5, 13.5, 17.5, 21.5, 25.5].map((y) => [4, y, 26])} color={w} sw={1.3} />
        </Glyph>
      </ViewCell>
      <ViewCell>
        <Glyph $w={34} $h={32}>
          <path d="M14 27.500H.7V1.200h27V13" stroke={w} strokeWidth="1.400" />
          <Lines rows={[[4, 6, 20], [4, 10, 20], [4, 14, 14], [4, 18, 12], [4, 22, 10]]} color={w} sw={1.3} />
          <circle cx="24.500" cy="22.500" r="9.500" fill="#e8ecf2" />
          <path d="M17 18Q19 14.500 23 13.500L26 15L25 19L22 20L23 23L26 25L24 30Q21 27 21 24L17 21ZM29 18L33 19.500Q34.500 23 33 26L29 25Z" fill={BLUE} />
        </Glyph>
      </ViewCell>
      <Glyph $w={12} $h={4} $ml={9}><path d="M0 0h12v4H0z" fill={w} /></Glyph>
      <Glyph $w={198} $h={22} $ml={9}>
        <path d="M0 12h198" stroke={w} strokeWidth="2" />
        <path d="M99 6h2v10h-2zM103 0h8v22h-8z" fill={w} />
      </Glyph>
      <Glyph $w={16} $h={16} $ml={9}><path d="M0 6.200h6V0h4v6.200h6v3.600h-6V16H6V9.800H0z" fill={w} /></Glyph>
      <StatusText $ml={27}><Label w={49} $size={21} $color={w}>130%</Label></StatusText>
      <IconSlot $w={14} />
    </StatusBar>
  );
}

function TaskbarRow() {
  const k = "#1a1c1e";
  return (
    <Taskbar>
      <Weather>
        <Glyph $w={47} $h={56} $mt={5} $box="0 0 47 50">
          <defs>
            <linearGradient id="umb" x1="0" x2="1"><stop offset="0" stopColor="#7fc0fa" /><stop offset="1" stopColor="#2a8fe8" /></linearGradient>
          </defs>
          <path d="M20 9V41q0 5-4 5t-4-5" stroke="#77797c" strokeWidth="4" strokeLinecap="round" />
          <path d="M0 29Q3 12 20 12T40 29Q36 26 33 29Q29 26 26 29Q20 26 14 29Q11 26 7 29Q4 26 0 29Z" fill="url(#umb)" />
          <path d="M27 2l-4 6M36 1l-4 5M39 8l-4 6M46 8l-4 5M46 18l-4 5" stroke="#3d9df0" strokeWidth="3" strokeLinecap="round" />
        </Glyph>
        <Stack $ml={14}>
          <Label w={48} $size={23} $lh={32} $color={k}>55°F</Label>
          <Label w={161} $size={23} $lh={32} $color="#4e575b">Rain tomorrow</Label>
        </Stack>
      </Weather>
      <Apps>
        <Glyph $w={46} $h={46} $mt={26}>
          <defs><linearGradient id="win" x1="0" y1="0" x2="1" y2="1"><stop offset="0" stopColor="#4cc9fa" /><stop offset="1" stopColor="#0075d3" /></linearGradient></defs>
          <path d="M1 0h21v22H0V1zM24 0h21l1 1v21H24zM0 24h22v22H1l-1-1zM24 24h22v21l-1 1H24z" fill="url(#win)" />
        </Glyph>
        <SearchPill>
          <Glyph $w={28} $h={28}>
            <circle cx="16.500" cy="11" r="9.500" stroke={k} strokeWidth="2.800" />
            <path d="M10 18L2 26" stroke={k} strokeWidth="3.200" strokeLinecap="round" />
          </Glyph>
          <Label w={74} $ml={9} $size={23} $color={k}>Search</Label>
        </SearchPill>
        <AppSlot $ml={30} $pt={16}>
          <Glyph $w={48} $h={44}>
            <rect x="0" y="12" width="36" height="32" rx="2" fill="#2b2b2b" />
            <path d="M0 41h36v1q0 2-2 2H2q-2 0-2-2z" fill="#000" />
            <rect x="12" y="0" width="36" height="32" rx="2" fill="#f8f8f8" />
            <path d="M12 12h24v20H14q-2 0-2-2z" fill="#b9b9b9" />
          </Glyph>
        </AppSlot>
        <AppSlot $ml={27} $pt={15}>
          <Glyph $w={46} $h={46}>
            <defs><linearGradient id="chat" x1="0" y1="0" x2="1" y2="0"><stop offset="0" stopColor="#8b62b5" /><stop offset="1" stopColor="#6f8ae8" /></linearGradient></defs>
            <path d="M23 0A23 22.500 0 1 1 13 43L1 46L3 34A23 22.500 0 0 1 23 0Z" fill="url(#chat)" />
            <path d="M3 34A23 22.500 0 0 0 43 33Q36 46 23 45.500Q17 45 13 43L1 46Z" fill="#5a55c8" />
            <rect x="10" y="13" width="19" height="19" rx="3" fill="#fff" />
            <path d="M31 19l5-4v15l-5-4z" fill="#fff" />
          </Glyph>
        </AppSlot>
        <AppSlot $ml={29} $pt={18}>
          <Glyph $w={48} $h={42}>
            <path d="M0 2q0-2 2-2h13l5 4h26q2 0 2 2v10H0z" fill="#dfa007" />
            <path d="M0 8h18l4-3h24q2 0 2 2v33q0 2-2 2H2q-2 0-2-2z" fill="#ffcf48" />
            <path d="M8 42V34q0-6 6-6h20q6 0 6 6v8z" fill="#1584d8" />
            <path d="M14 34h19v2H14z" fill="#0b4f93" />
          </Glyph>
          <RunMark />
        </AppSlot>
        <AppSlot $ml={28} $pt={14}>
          <Glyph $w={48} $h={48}>
            <defs>
              <linearGradient id="edge1" x1="0" y1="0" x2="1" y2=".4"><stop offset="0" stopColor="#2aa5ea" /><stop offset=".55" stopColor="#27bfd0" /><stop offset="1" stopColor="#68dc56" /></linearGradient>
              <linearGradient id="edge2" x1="0" y1="0" x2="0" y2="1"><stop offset="0" stopColor="#1490e0" /><stop offset="1" stopColor="#0c66c0" /></linearGradient>
            </defs>
            <path d="M0 22C2 8 12 0 24 0C38 0 48 9 48 20C48 28 42 32 36 32C30 32 28 29 30 26C33 18 27 12 18 12C8 12 2 18 0 22Z" fill="url(#edge1)" />
            <path d="M0 24C0 14 8 11 16 11C26 12 31 18 30 24C28 20 22 18 19 22C14 30 20 42 32 47Q28 48 24 48C10 48 0 37 0 24Z" fill="url(#edge2)" />
            <path d="M18 23C12 30 16 44 30 47C38 46 43 41 45 37C45 35 43 35 40 37C30 40 20 34 18 23Z" fill="#12509c" />
          </Glyph>
          <RunMark />
        </AppSlot>
        <AppSlot $ml={28} $pt={14}>
          <Glyph $w={46} $h={48}>
            <defs><linearGradient id="store" x1="0" y1="0" x2=".6" y2="1"><stop offset="0" stopColor="#1466b8" /><stop offset="1" stopColor="#22355f" /></linearGradient></defs>
            <path d="M11 11V3q0-2 2-2h20q2 0 2 2v8" stroke="#1cb6ef" strokeWidth="3.500" />
            <path d="M0 7h46v35q0 6-6 6H6q-6 0-6-6z" fill="url(#store)" />
            <path d="M11 6v5M35 6v5" stroke="#35c6f5" strokeWidth="3.500" />
            <path d="M13 17h9v9h-9z" fill="#f25022" /><path d="M24 17h9v9h-9z" fill="#7fba00" />
            <path d="M13 28h9v9h-9z" fill="#00a4ef" /><path d="M24 28h9v9h-9z" fill="#ffb900" />
          </Glyph>
        </AppSlot>
        <AppSlot $ml={28} $pt={18} $on>
          <WordLogo w={42} h={42} tile />
          <RunMark $on />
        </AppSlot>
        <AppSlot $ml={28} $pt={17}>
          <Glyph $w={42} $h={42}>
            <defs>
              <linearGradient id="pic" x1="0" y1="0" x2="1" y2=".7"><stop offset="0" stopColor="#2678d8" /><stop offset=".5" stopColor="#2a72c8" /><stop offset="1" stopColor="#8a58b8" /></linearGradient>
              <clipPath id="picClip"><rect width="42" height="42" rx="5" /></clipPath>
            </defs>
            <g clipPath="url(#picClip)">
              <path d="M0 0h42v42H0z" fill="url(#pic)" />
              <path d="M0 33L17 17q4-3 8 1L42 37V42H0z" fill="#32c3f3" />
              <path d="M7 42L23 27q3-3 6 0L42 39V42z" fill="#1479d0" />
            </g>
            <circle cx="31" cy="8" r="4" fill="#eef4fb" />
          </Glyph>
          <RunMark />
        </AppSlot>
      </Apps>
      <Tray>
        <Glyph $w={26} $h={15} $mt={40}><path d="M1 14L13 1.500L25 14" stroke={k} strokeWidth="2.400" /></Glyph>
        <Glyph $w={33} $h={27} $ml={34} $mt={36}>
          <path d="M8 22C2 22 0 18 1 14C2 10 6 8 8 8C12 0 22 0 25 6L28 12L16 22Z" fill="#9a9a9a" stroke={k} strokeWidth="2.400" />
          <circle cx="23" cy="18" r="9.500" fill="#fff" />
          <path d="M17 16a6.500 6 0 0 1 12-1M29 20a6.500 6 0 0 1-12 1M29 11v4.500h-5M17 25.500V21h5" stroke="#1b73c8" strokeWidth="2" />
        </Glyph>
        <Glyph $w={32} $h={22} $ml={40} $mt={36}>
          <rect x="1" y="1" width="30" height="20" rx="3" stroke={k} strokeWidth="2.200" />
          <path d="M5 7h3M10 7h3M15 7h3M20 7h3M25 7h2M8 12h3M13 12h3M18 12h3M23 12h2M6 17h20" stroke={k} strokeWidth="2.200" />
        </Glyph>
        <Glyph $w={32} $h={24} $ml={40} $mt={36}>
          <path d="M1 10Q16-7 31 10M6 14Q16 4 26 14M11 18Q16 12.500 21 18" stroke={k} strokeWidth="2.300" strokeLinecap="round" />
          <circle cx="16" cy="20.500" r="3" fill={k} />
        </Glyph>
        <Glyph $w={32} $h={26} $ml={16} $mt={35}>
          <path d="M1 9.500H6L13 3V23L6 17.500H1Z" stroke={k} strokeWidth="2" strokeLinejoin="round" />
          <path d="M18 9q3 4 0 8M22 5q6 8 0 16M26.500 1q9 12 0 24" stroke={k} strokeWidth="2" strokeLinecap="round" />
        </Glyph>
        <Glyph $w={32} $h={26} $ml={16} $mt={34}>
          <path d="M3 0v4M8 0v4M5.500 12V24" stroke={k} strokeWidth="2" />
          <path d="M0 4h11v5q-1 5-5.500 5T0 9z" fill={k} />
          <path d="M12 5.500h13q3 0 3 3v12q0 3-3 3H10" stroke={k} strokeWidth="2.200" />
          <path d="M13 8h10q2 0 2 2v9q0 2-2 2H9v-4q4-2 4-9zM28 11h2q2 0 2 3.500T30 18h-2z" fill={k} />
        </Glyph>
        <Stack $ml={33} $pt={16} $end>
          <Label w={85} $size={23} $lh={32} $color={k}>9:51 AM</Label>
          <Label w={98} $size={23} $lh={32} $color={k}>4/4/2023</Label>
        </Stack>
        <Badge><Line $size={20} $color="#fff" $lh={28}>2</Line></Badge>
      </Tray>
    </Taskbar>
  );
}

export default function App() {
  return (
    <Shell>
      <Global />
      <TopBar />
      <Ribbon>
        <Clipboard />
        <FontGroup />
        <ParagraphGroup />
        <StylesGroup />
        <EditingGroup />
        <RibbonTail>
          <Glyph $w={16} $h={11}><path d="M1 9.500L8 2L15 9.500" stroke="#6a6a6a" strokeWidth="3" /></Glyph>
        </RibbonTail>
      </Ribbon>
      <Workspace>
        <Page>
          <Paragraph>
            <TextRow $h={78}>
              <Label w={1622} $font={SERIF} $size={42} $lh={80} $color="#000">
                Students, Faculty and Staff, UH Administration, Sponsors, Local Community, Service Providers,
              </Label>
            </TextRow>
            <TextRow>
              <Label w={313} $font={SERIF} $size={42} $lh={80} $color="#000">Media, Regulatory</Label>
              <Caret />
            </TextRow>
          </Paragraph>
          <Diagram />
        </Page>
        <Scrollbar>
          <ScrollButton><Glyph $w={18} $h={9}><path d="M0 9L9 0L18 9Z" fill="#777" /></Glyph></ScrollButton>
          <Thumb />
          <ScrollButton><Arrow w={16} h={8} /></ScrollButton>
        </Scrollbar>
      </Workspace>
      <Status />
      <TaskbarRow />
    </Shell>
  );
}
